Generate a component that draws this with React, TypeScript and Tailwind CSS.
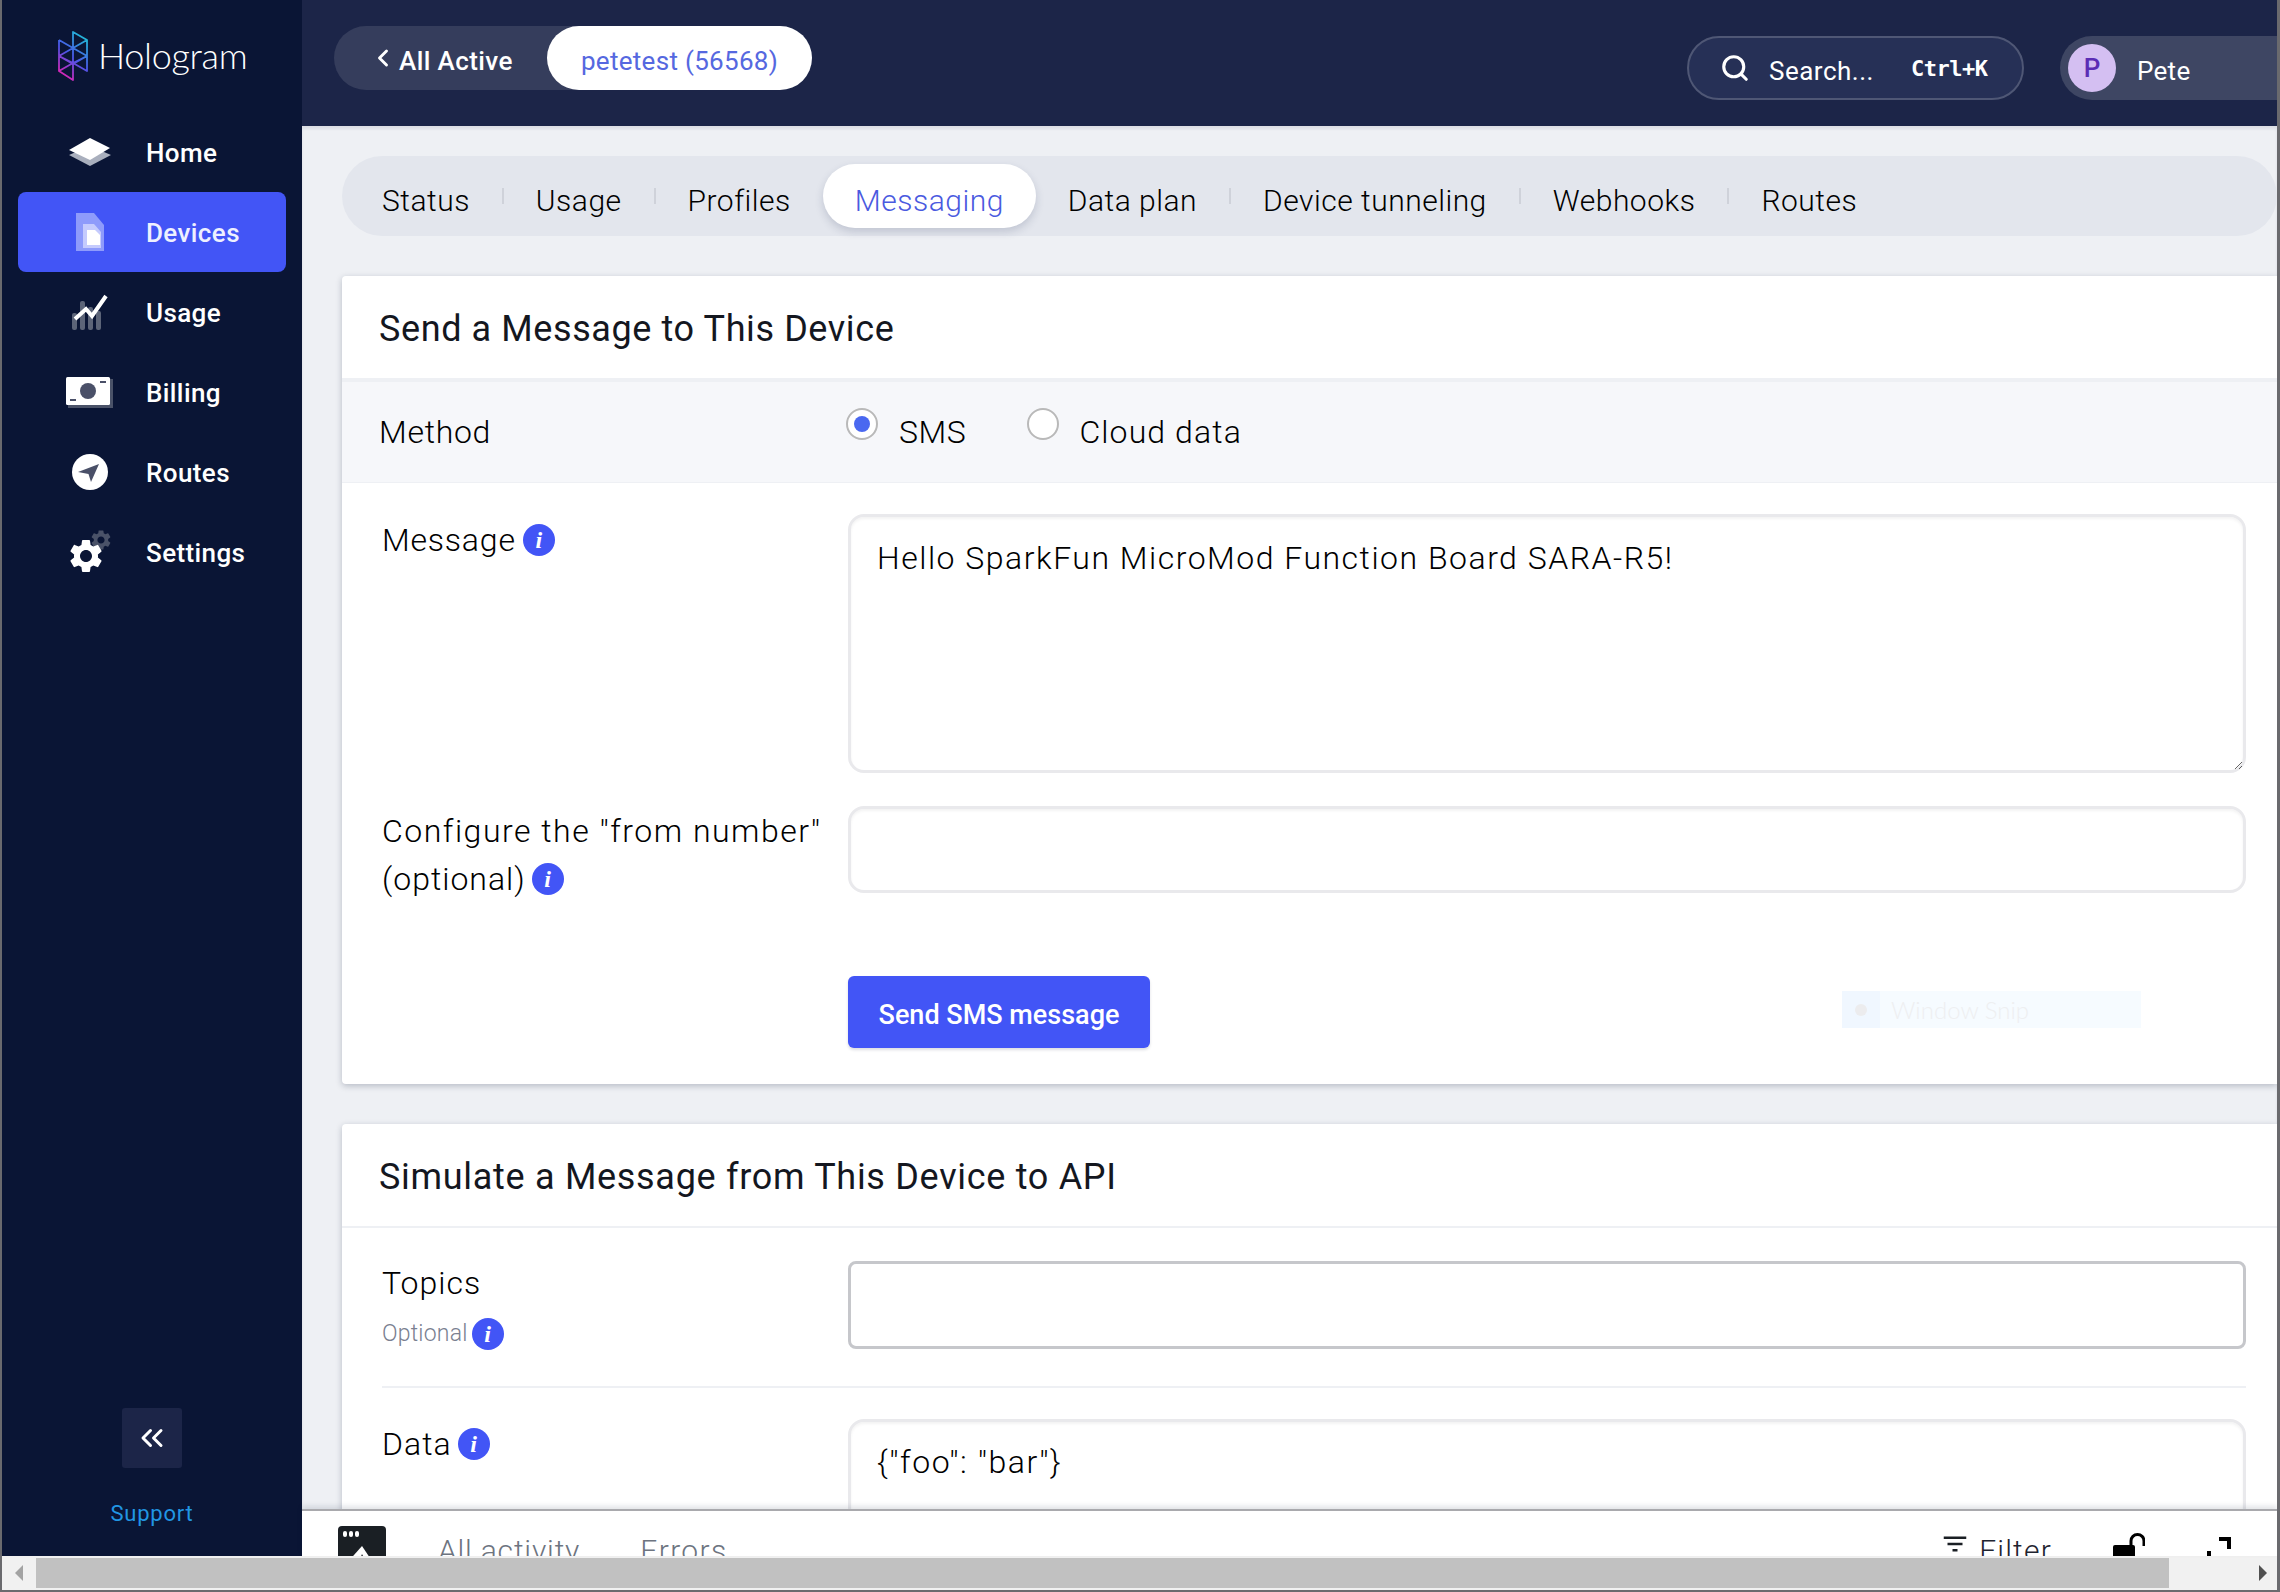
import React from "react";
import { ChevronLeft, ChevronsLeft, Search } from "lucide-react";
import { MdSettings, MdFilterList } from "react-icons/md";

function Logo() {
  return (
    <svg width="30" height="50" viewBox="0 0 30 50" fill="none" className="shrink-0">
      <defs>
        <linearGradient id="holo" x1="0.7" y1="0" x2="0.2" y2="1">
          <stop offset="0" stopColor="#22b8d8" />
          <stop offset="0.5" stopColor="#4a55e8" />
          <stop offset="1" stopColor="#e820b0" />
        </linearGradient>
      </defs>
      <path
        d="M15 1L29 9V40L15 32V1ZM15 1V17M1 9L15 17L29 9M1 9V40L15 49V32L1 40M1 9L15 17L1 25L15 32L29 25L15 17M1 25L15 33M29 25L15 33"
        stroke="url(#holo)"
        strokeWidth="1.8"
        strokeLinejoin="round"
      />
    </svg>
  );
}

function HomeIcon() {
  return (
    <svg width="44" height="30" viewBox="0 0 44 30">
      <path d="M22 9L43 18L22 29L1 18Z" fill="#a9afbd" />
      <path d="M22 1L42 11L22 23L1 13Z" fill="#ffffff" />
    </svg>
  );
}
function SimIcon() {
  return (
    <svg width="28" height="38" viewBox="0 0 28 38">
      <path d="M0 0H18L28 12V38H0Z" fill="#8e9bfb" />
      <path d="M7 11H18L25 19V35H7Z" fill="#c5cbfd" />
      <path d="M11 17H19L24 22V32H11Z" fill="#ffffff" />
    </svg>
  );
}
function UsageIcon() {
  return (
    <svg width="36" height="38" viewBox="0 0 36 38">
      <g fill="#5c6478">
        <rect x="0" y="20" width="5" height="17" rx="2" />
        <rect x="8" y="8" width="5" height="29" rx="2" />
        <rect x="16" y="14" width="5" height="23" rx="2" />
        <rect x="24" y="18" width="5" height="19" rx="2" />
      </g>
      <path d="M3 26L14 16L20 23L34 3" stroke="#fff" strokeWidth="4" fill="none" />
    </svg>
  );
}
function BillingIcon() {
  return (
    <svg width="47" height="31" viewBox="0 0 47 31">
      <rect x="2" y="2" width="45" height="29" fill="#4a5268" />
      <rect x="0" y="0" width="44" height="28" rx="1.5" fill="#fff" />
      <circle cx="22" cy="14" r="8" fill="#4a5068" />
      <rect x="34" y="4" width="6" height="2" fill="#4a5068" />
      <rect x="4" y="22" width="6" height="2" fill="#4a5068" />
    </svg>
  );
}
function RoutesIcon() {
  return (
    <svg width="36" height="36" viewBox="0 0 36 36">
      <circle cx="18" cy="18" r="18" fill="#fff" />
      <path d="M27 10L19 28L16.5 20L6 18Z" fill="#4a5068" />
    </svg>
  );
}
function SettingsIcon() {
  return (
    <div className="relative w-[42px] h-[42px]">
      <MdSettings className="absolute right-[-2px] top-[-3px] text-[#4a5268]" size={24} />
      <MdSettings className="absolute left-[-3px] bottom-[-3px] text-white" size={40} />
    </div>
  );
}

const nav = [
  { label: "Home", icon: <HomeIcon />, active: false },
  { label: "Devices", icon: <SimIcon />, active: true },
  { label: "Usage", icon: <UsageIcon />, active: false },
  { label: "Billing", icon: <BillingIcon />, active: false },
  { label: "Routes", icon: <RoutesIcon />, active: false },
  { label: "Settings", icon: <SettingsIcon />, active: false },
];

function Sidebar() {
  return (
    <aside className="w-[300px] shrink-0 bg-[#0a1535] flex flex-col items-center text-white">
      <div className="w-full h-[112px] pl-[56px] pt-[31px] flex items-start gap-[10px]">
        <Logo />
        <span className="font-['Lato'] font-light text-[36px] leading-[48px] tracking-[-0.3px]">Hologram</span>
      </div>
      <nav className="w-full px-[16px] flex flex-col">
        {nav.map((n) => (
          <div
            key={n.label}
            className={`h-[80px] w-[268px] flex items-center rounded-[8px] ${n.active ? "bg-[#4255f6] text-[#eef0ff]" : ""}`}
          >
            <div className="w-[128px] pl-[15px] flex justify-center items-center shrink-0">{n.icon}</div>
            <span className="text-[26px] font-medium leading-none tracking-[0.4px] pt-[2px]">{n.label}</span>
          </div>
        ))}
      </nav>
      <div className="flex-1" />
      <div className="w-[60px] h-[60px] rounded-[3px] bg-[#1c2548] flex items-center justify-center">
        <ChevronsLeft size={36} strokeWidth={2} className="text-white" />
      </div>
      <div className="mt-[32px] mb-[28px] text-[22px] leading-[28px] text-[#2196e3] tracking-[0.8px]">Support</div>
    </aside>
  );
}

function Header() {
  return (
    <header className="h-[126px] shrink-0 bg-[#1c2548] flex items-start pt-[26px] pl-[32px]">
      <div className="h-[64px] w-[256px] rounded-l-full bg-[#353d5c] text-white flex items-center pl-[35px] gap-[2px]">
        <ChevronLeft size={28} strokeWidth={2.5} className="shrink-0" />
        <span className="text-[26px] font-medium tracking-[0.4px] pt-[6px]">All Active</span>
      </div>
      <div className="h-[64px] w-[265px] -ml-[43px] rounded-full bg-white text-[#5568e0] flex items-center justify-center text-[26px] tracking-[0.3px] pt-[6px] relative">
        petetest (56568)
      </div>
      <div className="flex-1" />
      <div className="mt-[10px] h-[64px] w-[337px] rounded-full border-2 border-[#4f5775] bg-[#263056] text-white flex items-center pl-[31px]">
        <Search size={30} strokeWidth={2.5} className="shrink-0" />
        <span className="ml-[19px] text-[26px] tracking-[0.5px] pt-[6px]">Search...</span>
        <span className="ml-[37px] text-[22px] font-bold font-['DejaVu_Sans_Mono'] tracking-[-0.5px]">Ctrl+K</span>
      </div>
      <div className="mt-[10px] ml-[36px] h-[64px] w-[217px] rounded-l-full bg-[#3e4663] text-white flex items-center pl-[8px]">
        <div className="w-[48px] h-[48px] rounded-full bg-[#d4bff2] text-[#5b2db5] text-[26px] font-medium flex items-center justify-center">P</div>
        <span className="ml-[21px] text-[26px] tracking-[0.3px] pt-[6px]">Pete</span>
      </div>
    </header>
  );
}

const tabs = ["Status", "Usage", "Profiles", "Messaging", "Data plan", "Device tunneling", "Webhooks", "Routes"];

function Tabs() {
  return (
    <div className="h-[80px] rounded-l-[40px] rounded-r-[40px] bg-[#e3e6ed] flex items-center pl-[8px] text-[30px] text-black font-light tracking-[0.5px]">
      {tabs.map((t, i) => {
        const active = t === "Messaging";
        const sep = i > 0 && t !== "Messaging" && t !== "Data plan";
        return (
          <React.Fragment key={t}>
            {sep && <div className="w-[2px] h-[16px] bg-[#cfd2da] shrink-0" />}
            <div
              className={`h-[64px] px-[32px] pt-[8px] flex items-center rounded-full ${active ? "bg-white text-[#4a5ae0] shadow-[0_4px_8px_rgba(40,50,90,0.18)]" : ""}`}
            >
              {t}
            </div>
          </React.Fragment>
        );
      })}
    </div>
  );
}

function Info() {
  return (
    <span className="inline-flex w-[32px] h-[32px] rounded-full bg-[#4255f6] text-white items-center justify-center font-['Liberation_Serif'] italic font-bold text-[24px] leading-none tracking-normal align-middle shrink-0">
      i
    </span>
  );
}

const fieldCls =
  "block w-full bg-white border-[3px] border-[#e9e9ec] rounded-[16px] shadow-[inset_0_2px_3px_rgba(0,0,0,0.05)] px-[26px] text-[32px] font-light text-black outline-none";

function Card1() {
  return (
    <section className="relative bg-white rounded-l-[4px] shadow-[0_2px_6px_rgba(20,30,60,0.25)]">
      <div className="h-[102px] pl-[37px] pt-[4px] flex items-center text-[36px] text-[#14171f] tracking-[0.6px]">Send a Message to This Device</div>
      <div className="h-[105px] border-t-[4px] border-[#eef0f4] bg-[#f6f7fa] border-b border-b-[#eef0f4] flex items-center pl-[37px] text-[32px] font-light text-black">
        <div className="w-[467px] tracking-[0.7px]">Method</div>
        <div className="w-[32px] h-[32px] rounded-full border-2 border-[#b9b9b9] bg-white flex items-center justify-center -mt-[16px]">
          <div className="w-[16px] h-[16px] rounded-full bg-[#4a68f0]" />
        </div>
        <span className="ml-[21px] tracking-[0.6px]">SMS</span>
        <div className="ml-[61px] w-[32px] h-[32px] rounded-full border-2 border-[#b9b9b9] bg-white -mt-[16px]" />
        <span className="ml-[20px] tracking-[1.1px]">Cloud data</span>
      </div>
      <div className="pl-[40px] pr-[31px] pt-[31px] pb-[36px]">
        <div className="flex">
          <div className="w-[466px] shrink-0 pt-[6px] flex items-center self-start gap-[7px] text-[32px] font-light text-black leading-[40px] tracking-[0.8px]">
            Message <Info />
          </div>
          <textarea
            defaultValue="Hello SparkFun MicroMod Function Board SARA-R5!"
            className={`${fieldCls} h-[259px] pt-[21px] leading-[40px] resize-y tracking-[1.5px]`}
          />
        </div>
        <div className="flex mt-[33px]">
          <div className="w-[466px] shrink-0 text-[32px] font-light text-black leading-[48px] pt-[1px] -mb-[10px] tracking-[1.5px]">
            Configure the "from number"
            <br />
            <span className="inline-flex items-center gap-[6px] tracking-[1px]">(optional) <Info /></span>
          </div>
          <input className={`${fieldCls} h-[87px]`} />
        </div>
        <div className="pl-[466px] mt-[83px]">
          <button className="h-[72px] w-[302px] pt-[6px] rounded-[6px] bg-[#4255f6] text-white text-[27px] font-medium shadow-[0_2px_3px_rgba(20,30,60,0.15)]">
            Send SMS message
          </button>
        </div>
      </div>
      <div className="absolute left-[1500px] top-[715px] w-[299px] h-[37px] bg-[#f6fbff] flex items-center text-[24px] text-[#eeeff1]">
        <div className="w-[38px] h-full bg-[#f0f7ff] flex items-center justify-center shrink-0">
          <div className="w-[12px] h-[12px] rounded-full bg-[#ececee]" />
        </div>
        <span className="ml-[11px] font-['Lato'] font-light">Window Snip</span>
      </div>
    </section>
  );
}

function Card2() {
  return (
    <section className="mt-[40px] bg-white rounded-l-[4px] shadow-[0_2px_6px_rgba(20,30,60,0.25)]">
      <div className="h-[104px] pl-[37px] pt-[4px] flex items-center text-[36px] text-[#14171f] border-b-2 border-[#eef0f4] tracking-[0.7px]">
        Simulate a Message from This Device to API
      </div>
      <div className="pl-[40px] pr-[31px] pt-[33px]">
        <div className="flex pb-[36px] border-b-2 border-[#eef0f4]">
          <div className="w-[466px] shrink-0 text-black">
            <div className="text-[32px] font-light leading-[44px] tracking-[1px]">Topics</div>
            <div className="flex items-center gap-[4px] text-[23px] font-light text-[#7a8090] mt-[13px] leading-[32px] tracking-[0.2px]">
              Optional <Info />
            </div>
          </div>
          <input className="block w-full h-[88px] bg-white border-[3px] border-[#c6c7cb] rounded-[8px]" />
        </div>
        <div className="flex pt-[31px]">
          <div className="w-[466px] shrink-0 pt-[5px] flex items-center self-start gap-[6px] text-[32px] font-light text-black leading-[40px] tracking-[1px]">
            Data <Info />
          </div>
          <textarea defaultValue={'{"foo": "bar"}'} className={`${fieldCls} h-[200px] pt-[20px] leading-[40px] resize-none tracking-[1.6px]`} />
        </div>
      </div>
    </section>
  );
}

function BottomBar() {
  return (
    <div className="h-[47px] shrink-0 bg-white border-t-2 border-[#a9a9ad] shadow-[0_-3px_5px_rgba(20,30,60,0.12)] relative overflow-hidden flex items-start pl-[36px] pr-[46px]">
      <div className="relative mt-[15px] w-[48px] h-[40px] bg-[#1a1f24] rounded-t-[4px] shrink-0">
        <div className="absolute left-[5px] top-[5px] flex gap-[2px]">
          <span className="w-[4px] h-[6px] rounded-full bg-white" />
          <span className="w-[4px] h-[6px] rounded-full bg-white" />
          <span className="w-[4px] h-[6px] rounded-full bg-white" />
        </div>
        <svg className="absolute left-0 top-[18px]" width="48" height="20" viewBox="0 0 48 20">
          <path d="M8 20L24 2L36 20" fill="#fff" />
          <path d="M20 20L24 10L29 20" fill="#1a1f24" />
        </svg>
      </div>
      <span className="ml-[52px] mt-[20px] text-[30px] font-light text-[#6d7480] leading-[40px] tracking-[0.8px]">All activity</span>
      <span className="ml-[60px] mt-[20px] text-[30px] font-light text-[#6d7480] leading-[40px] tracking-[1.4px]">Errors</span>
      <div className="flex-1" />
      <MdFilterList size={30} className="mt-[18px] text-[#1a1f24]" />
      <span className="ml-[9px] mt-[20px] text-[30px] font-light text-[#1f2430] leading-[40px] tracking-[1.2px]">Filter</span>
      <svg className="ml-[61px] mt-[22px]" width="32" height="30" viewBox="0 0 32 30">
        <path d="M18 14V8a6.5 6.5 0 0 1 13 0v5" fill="none" stroke="#000" strokeWidth="3" />
        <rect x="0" y="12" width="22" height="18" rx="2" fill="#000" />
      </svg>
      <svg className="ml-[62px] mt-[26px]" width="24" height="30" viewBox="0 0 24 30">
        <path d="M12 2H22V12" fill="none" stroke="#000" strokeWidth="4" />
        <path d="M2 14V28" fill="none" stroke="#000" strokeWidth="4" />
      </svg>
    </div>
  );
}

function Scrollbar() {
  return (
    <div className="h-[34px] shrink-0 bg-[#f1f1f1] flex items-stretch py-[2px]">
      <div className="w-[34px] shrink-0 flex items-center justify-center">
        <div className="w-0 h-0 border-y-[8px] border-y-transparent border-r-[8px] border-r-[#a3a3a3]" />
      </div>
      <div className="w-[2133px] bg-[#c1c1c1]" />
      <div className="flex-1 flex items-center justify-end pr-[10px]">
        <div className="w-0 h-0 border-y-[8px] border-y-transparent border-l-[8px] border-l-[#505050]" />
      </div>
    </div>
  );
}

export default function App() {
  return (
    <div className="w-[2280px] h-[1592px] overflow-hidden flex flex-col bg-white font-['Roboto',sans-serif] border-l-2 border-r-[3px] border-b-2 border-[#6a6a6e]">
      <div className="flex-1 min-h-0 flex">
        <Sidebar />
        <main className="flex-1 min-w-0 flex flex-col">
          <Header />
          <div className="flex-1 min-h-0 overflow-hidden bg-[#eef0f4] pl-[40px] pt-[30px] shadow-[inset_0_3px_3px_rgba(20,30,60,0.08)]">
            <Tabs />
            <div className="mt-[40px]">
              <Card1 />
              <Card2 />
            </div>
          </div>
          <BottomBar />
        </main>
      </div>
      <Scrollbar />
    </div>
  );
}
